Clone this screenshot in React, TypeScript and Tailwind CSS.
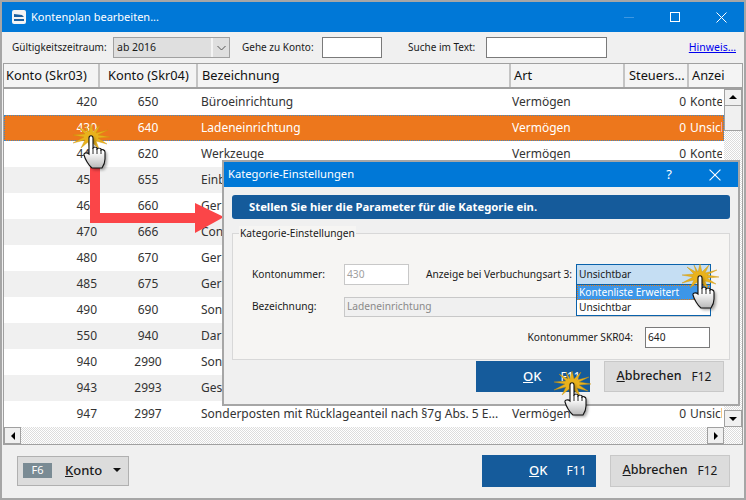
const rows = [
  { a: '420', b: '650', name: 'Büroeinrichtung', art: 'Vermögen', anz: 'Konten' },
  { a: '430', b: '640', name: 'Ladeneinrichtung', art: 'Vermögen', anz: 'Unsichtbar', selected: true },
  { a: '440', b: '620', name: 'Werkzeuge', art: 'Vermögen', anz: 'Konten' },
  { a: '450', b: '655', name: 'Einbauten', art: 'Vermögen', anz: 'Konten', shaded: true },
  { a: '460', b: '660', name: 'Gerüst- und Schalungsmaterial', art: 'Vermögen', anz: 'Konten' },
  { a: '470', b: '666', name: 'Container', art: 'Vermögen', anz: 'Konten', shaded: true },
  { a: '480', b: '670', name: 'Geringwertige Wirtschaftsgüter', art: 'Vermögen', anz: 'Konten' },
  { a: '485', b: '675', name: 'Geringwertige Wirtschaftsgüter', art: 'Vermögen', anz: 'Konten', shaded: true },
  { a: '490', b: '690', name: 'Sonstige Betriebsausstattung', art: 'Vermögen', anz: 'Konten' },
  { a: '550', b: '940', name: 'Darlehen', art: 'Vermögen', anz: 'Konten', shaded: true },
  { a: '940', b: '2990', name: 'Sonderposten', art: 'Vermögen', anz: 'Konten' },
  { a: '943', b: '2993', name: 'Gesellschafter', art: 'Vermögen', anz: 'Konten', shaded: true },
  { a: '947', b: '2997', name: 'Sonderposten mit Rücklageanteil nach §7g Abs. 5 E...', art: 'Vermögen', anz: 'Unsichtbar' },
];

const handPath =
  'M18 15c0-3 4-3 4 0v10c1-1 3-1 4 0v1c1-1 3-1 4 0v1c1-1 4 0 4 2v7c0 4-1 6-3 9H21c-3-2-7-9-8-13c-.5-2 3-3 5-1z';

function ClickHand({ className }: { className: string }) {
  return (
    <svg className={className} width="50" height="52" viewBox="0 0 50 52">
      <defs>
        <linearGradient id="palm" x1="0" y1="0" x2="0" y2="1">
          <stop offset="0.5" stopColor="#fff" />
          <stop offset="1" stopColor="#b8b8b8" />
        </linearGradient>
      </defs>
      <polygon
        points="20,1 22,9 29,2 25,10 37,7 27,12 39,14 27,15 36,21 25,18 28,26 21,19 19,27 17,19 10,25 14,17 2,20 13,14 2,12 14,11 7,4 16,9 14,2 18,9"
        fill="#e9b21c"
        stroke="#c9920a"
        strokeWidth="0.4"
      />
      <path d={handPath} fill="#000" opacity="0.35" transform="translate(2 2)" className="blur-[1.5px]" />
      <path d={handPath} fill="url(#palm)" stroke="#111" strokeWidth="1.1" />
      <path d="M22 25v6M26 26v5M30 27v4" stroke="#111" strokeWidth="0.9" fill="none" />
    </svg>
  );
}

function ScrollBtn({ dir, className }: { dir: 'up' | 'down' | 'left' | 'right'; className?: string }) {
  const pts = { up: '1,6 9,6 5,2', down: '1,3 9,3 5,7', left: '7,1 7,9 3,5', right: '3,1 3,9 7,5' }[dir];
  return (
    <div className={`flex items-center justify-center bg-[#f0f0f0] border border-[#a0a0a0] ${className ?? ''}`}>
      <svg width="10" height="10" viewBox="0 0 10 10">
        <polygon points={pts} fill="#000" />
      </svg>
    </div>
  );
}

function HeaderCell({ label, className }: { label: string; className: string }) {
  return (
    <div className={`flex items-center h-[23px] border-r-2 border-[#c4c4c4] overflow-hidden whitespace-nowrap ${className}`}>
      {label}
    </div>
  );
}

export default function App() {
  return (
    <div className="relative w-[746px] h-[500px] overflow-hidden bg-[#f0f0f0] border-2 border-[#a6a6a6] text-[#1a1a1a] font-['Noto_Sans',sans-serif] text-[12px]">
      <div className="flex items-center h-[30px] bg-[#0078d7] text-white pl-[9px] text-[11px]">
        <svg width="16" height="16" viewBox="0 0 16 16" className="mr-[4px]">
          <rect x="1" y="1" width="14" height="14" rx="2" fill="#f4f4f4" />
          <path d="M3 5l8 1 2 2H3z" fill="#1b5f9e" />
          <rect x="3" y="10" width="10" height="2" fill="#1b5f9e" />
        </svg>
        <span>Kontenplan bearbeiten...</span>
        <div className="ml-auto flex items-center">
          <div className="w-[46px] flex justify-center"><div className="w-[10px] h-px bg-[#3d97e2]" /></div>
          <div className="w-[46px] flex justify-center"><div className="w-[10px] h-[10px] border border-white" /></div>
          <div className="w-[46px] flex justify-center">
            <svg width="11" height="11" viewBox="0 0 11 11"><path d="M.5.5l10 10M10.5.5l-10 10" stroke="#fff" fill="none" /></svg>
          </div>
        </div>
      </div>

      <div className="flex items-center h-[31px] pl-[10px] pr-[8px] text-[10px]">
        <span className="w-[101px] whitespace-nowrap">Gültigkeitszeitraum:</span>
        <div className="flex items-center w-[117px] h-[21px] bg-[#dfdfdf] border border-[#a0a0a0] pl-[3px] text-[10.5px]">
          ab 2016
          <div className="ml-auto flex items-center justify-center w-[18px] h-full border-l-2 border-[#f4f4f4]">
            <svg width="9" height="6" viewBox="0 0 9 6"><path d="M.5 1l4 4 4-4" stroke="#555" fill="none" /></svg>
          </div>
        </div>
        <span className="ml-[12px] w-[80px] whitespace-nowrap">Gehe zu Konto:</span>
        <div className="w-[60px] h-[21px] bg-white border border-[#7a7a7a]" />
        <span className="ml-[26px] w-[78px] whitespace-nowrap">Suche im Text:</span>
        <div className="w-[121px] h-[21px] bg-white border border-[#7a7a7a]" />
        <a className="ml-auto text-[#0000ee] underline text-[10.5px]">Hinweis…</a>
      </div>

      <div className="relative mx-[1px] h-[382px] border border-[#a0a0a0] flex flex-col text-[12px]">
        <div className="flex items-center h-[25px] bg-[#f4f4f4] border-b-2 border-[#a0a0a0] pr-[18px] text-[12.8px] text-[#111]">
          <HeaderCell label="Konto (Skr03)" className="w-[96px] pl-[2px]" />
          <HeaderCell label="Konto (Skr04)" className="w-[98px] pl-[8px]" />
          <HeaderCell label="Bezeichnung" className="w-[313px] pl-[4px]" />
          <HeaderCell label="Art" className="w-[114px] pl-[3px]" />
          <HeaderCell label="Steuers..." className="w-[64px] pl-[4px]" />
          <div className="flex-1 overflow-hidden whitespace-nowrap pl-[3px]">Anzeige</div>
        </div>
        <div className="flex flex-1 min-h-0">
          <div className="flex-1 min-w-0 bg-white overflow-hidden">
            {rows.map((r) => (
              <div
                key={r.a}
                className={`flex items-center h-[26px] whitespace-nowrap ${
                  r.selected
                    ? 'bg-[#ed771c] text-white outline-1 outline-dotted -outline-offset-1 outline-[#3b88c8]'
                    : r.shaded
                      ? 'bg-[#f0f0f0] text-[#333]'
                      : 'bg-white text-[#333]'
                }`}
              >
                <div className="w-[93px] text-right">{r.a}</div>
                <div className="w-[102px] text-center">{r.b}</div>
                <div className="w-[311px] pl-[2px] overflow-hidden">{r.name}</div>
                <div className="w-[118px] pl-[2px]">{r.art}</div>
                <div className="w-[58px] text-right">0</div>
                <div className="w-[36px] pl-[4px] overflow-hidden">{r.anz}</div>
              </div>
            ))}
          </div>
          <div className="flex flex-col w-[18px] bg-[repeating-conic-gradient(#dcdcdc_0_25%,#fff_0_50%)] bg-[length:2px_2px]">
            <ScrollBtn dir="up" className="h-[17px]" />
            <div className="h-[25px] bg-[#f0f0f0] border border-[#a0a0a0] border-t-0" />
            <ScrollBtn dir="down" className="mt-auto h-[17px]" />
          </div>
        </div>
        <div className="flex h-[17px] pr-[18px] bg-[repeating-conic-gradient(#dcdcdc_0_25%,#fff_0_50%)] bg-[length:2px_2px]">
          <ScrollBtn dir="left" className="w-[17px]" />
          <ScrollBtn dir="right" className="ml-auto w-[17px]" />
        </div>
      </div>

      <div className="flex items-center h-[51px] pl-[15px] pr-[14px]">
        <div className="flex items-center w-[112px] h-[30px] bg-[#dcdcdc] border border-[#b0b0b0] pl-[5px] font-medium text-[13px]">
          <span className="w-[29px] h-[15px] flex items-center justify-center bg-[#7a8b94] text-white text-[11px] font-normal">F6</span>
          <span className="ml-[13px]"><u>K</u>onto</span>
          <svg width="8" height="5" viewBox="0 0 8 5" className="ml-[11px]"><polygon points="0,0 8,0 4,4" fill="#111" /></svg>
        </div>
        <div className="ml-auto flex items-center gap-[19px] w-[114px] h-[32px] pl-[47px] bg-[#155b9b] text-white text-[13px]">
          <span className="font-medium"><u>O</u>K</span>
          <span className="text-[12px]">F11</span>
        </div>
        <div className="ml-[14px] flex items-center justify-center gap-[10px] w-[120px] h-[32px] bg-[#dcdcdc] border border-[#c8c8c8] text-[12.5px]">
          <span className="font-medium"><u>A</u>bbrechen</span>
          <span className="text-[12px]">F12</span>
        </div>
      </div>

      <svg className="absolute left-[88px] top-[161px]" width="140" height="72" viewBox="0 0 140 72">
        <polygon points="0,0 10,0 10,50 105,50 105,40 134,54 105,70 105,60 0,60" fill="#fb4548" />
      </svg>

      <div className="absolute left-[220px] top-[158px] w-[518px] h-[246px] bg-[#f0f0f0] border-2 border-[#a6a6a6] flex flex-col text-[10.2px]">
        <div className="flex items-center h-[25px] bg-[#0078d7] text-white pl-[4px] text-[11.2px]">
          Kategorie-Einstellungen
          <span className="ml-auto w-[46px] text-center text-[13px]">?</span>
          <svg width="12" height="12" viewBox="0 0 11 11" className="mx-[17px]"><path d="M.5.5l10 10M10.5.5l-10 10" stroke="#fff" fill="none" /></svg>
        </div>
        <div className="mx-[8px] mt-[8px] h-[24px] flex items-center bg-[#155b9b] rounded-[3px] pl-[17px] text-white font-bold text-[11.3px]">
          Stellen Sie hier die Parameter für die Kategorie ein.
        </div>
        <div className="relative mx-[8px] mt-[14px] h-[127px] border border-[#d8d8d8] bg-[#f6f5f3] flex flex-col">
          <span className="absolute -top-[8px] left-[6px] bg-[#f6f5f3] px-px leading-[14px]">Kategorie-Einstellungen</span>
          <div className="flex items-center mt-[30px] pl-[19px]">
            <span className="w-[92px] whitespace-nowrap">Kontonummer:</span>
            <div className="w-[65px] h-[21px] bg-white border border-[#c8c8c8] pl-[2px] text-[#a0a0a0] flex items-center">430</div>
            <span className="ml-[17px] w-[150px] whitespace-nowrap">Anzeige bei Verbuchungsart 3:</span>
            <div className="w-[135px] h-[21px] bg-[#c5def3] border border-[#0a62ab] pl-[2px] flex items-center">Unsichtbar</div>
          </div>
          <div className="flex items-center mt-[12px] pl-[19px]">
            <span className="w-[92px] whitespace-nowrap">Bezeichnung:</span>
            <div className="w-[367px] h-[20px] bg-[#f0f0f0] border border-[#c8c8c8] pl-[2px] text-[#8a8a8a] flex items-center">Ladeneinrichtung</div>
          </div>
          <div className="flex items-center justify-end mt-[10px] pr-[19px]">
            <span className="whitespace-nowrap">Kontonummer SKR04:</span>
            <div className="ml-[12px] w-[65px] h-[21px] bg-white border border-[#7a7a7a] pl-[2px] flex items-center">640</div>
          </div>
        </div>
        <div className="flex items-center justify-end pr-[14px] mt-[1px]">
          <div className="flex items-center gap-[19px] w-[114px] h-[31px] pl-[47px] bg-[#155b9b] text-white text-[13px]">
            <span className="font-medium"><u>O</u>K</span>
            <span className="text-[12px]">F11</span>
          </div>
          <div className="ml-[14px] flex items-center justify-center gap-[10px] w-[120px] h-[31px] bg-[#dcdcdc] border border-[#c8c8c8] text-[12.5px]">
            <span className="font-medium"><u>A</u>bbrechen</span>
            <span className="text-[12px]">F12</span>
          </div>
        </div>
        <div className="absolute left-[352px] top-[122px] w-[135px] h-[32px] bg-white border border-[#0a62ab] flex flex-col leading-[15px]">
          <div className="bg-[#3d96e8] text-white pl-[2px] outline-1 outline-dotted -outline-offset-1 outline-[#e57a10] h-[15px]">Kontenliste Erweitert</div>
          <div className="pl-[2px]">Unsichtbar</div>
        </div>
      </div>

      <ClickHand className="absolute left-[69px] top-[121px]" />
      <ClickHand className="absolute left-[678px] top-[261px]" />
      <ClickHand className="absolute left-[550px] top-[368px]" />
    </div>
  );
}
